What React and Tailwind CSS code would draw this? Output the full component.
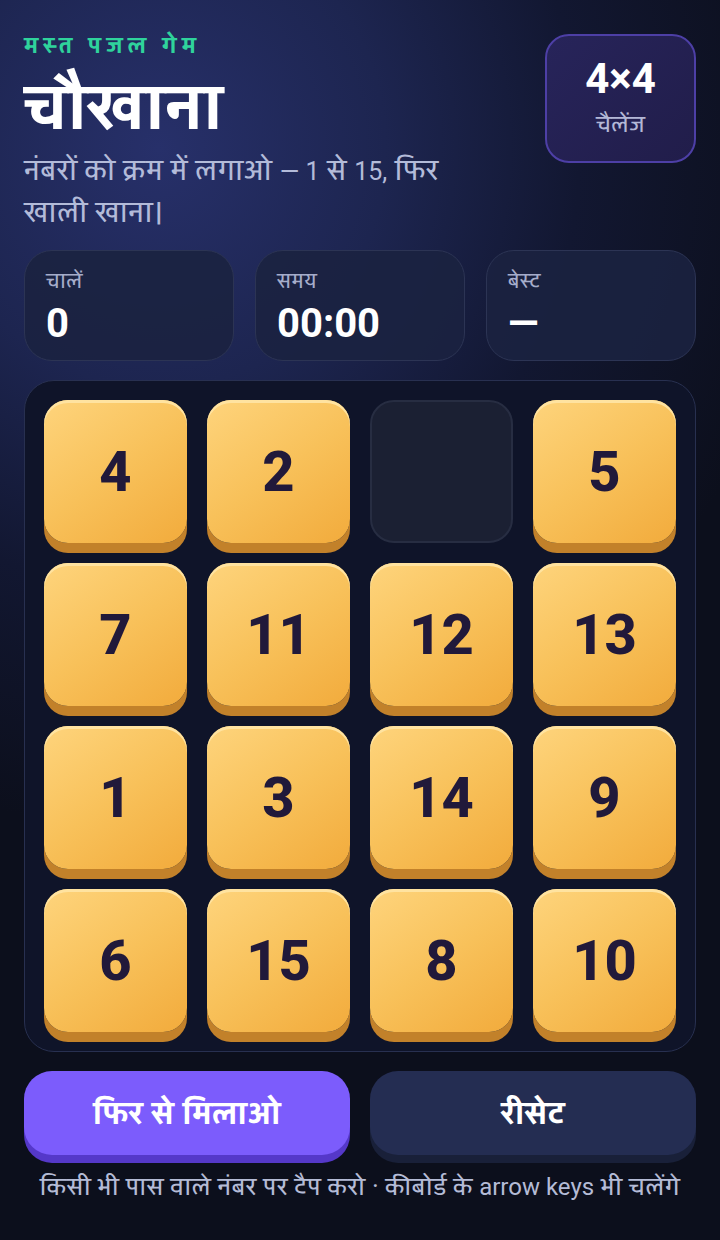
const tiles = [4, 2, 0, 5, 7, 11, 12, 13, 1, 3, 14, 9, 6, 15, 8, 10];

const stats = [
  { label: 'चालें', value: '0' },
  { label: 'समय', value: '00:00' },
  { label: 'बेस्ट', value: '—' },
];

const Tile = ({ n }) => {
  if (!n) {
    return <div className="aspect-square rounded-[24px] bg-[#1b2033] border-2 border-[#272d42]" />;
  }
  return (
    <div className="aspect-square rounded-[24px] bg-[linear-gradient(145deg,#fed47c_0%,#f8c15a_50%,#f2ab3c_100%)] shadow-[inset_0_3px_0_#ffe3a0,0_10px_0_#c2812a] flex items-center justify-center">
      <span className="text-[56px] font-extrabold text-[#21193a] leading-none">{n}</span>
    </div>
  );
};

export default function App() {
  return (
    <div
      className="w-[720px] h-[1240px] overflow-hidden bg-[radial-gradient(ellipse_90%_55%_at_22%_12%,#27306a_0%,#1d2550_35%,#121731_65%,#0c0f1c_100%)] px-6 pt-[30px] text-white"
      style={{ fontFamily: 'Roboto, Yantramanav, "Noto Sans Devanagari", sans-serif' }}
    >
      <header className="flex justify-between items-start">
        <div>
          <p className="text-[24px] font-bold tracking-[0.2em] text-[#2fd39c] leading-[30px]">मस्त पजल गेम</p>
          <h1 className="text-[67px] font-bold leading-[80px] mt-[6px]">चौखाना</h1>
          <p className="text-[30px] leading-[40px] text-[#b3bbd9] max-w-[460px] mt-[4px]">
            नंबरों को क्रम में लगाओ <span className="text-[25px]">— 1</span> से <span className="text-[25px]">15,</span> फिर खाली खाना।
          </p>
        </div>
        <div className="w-[151px] h-[129px] mt-[4px] rounded-[24px] border-2 border-[#4d3fa6] bg-[linear-gradient(135deg,#27245a,#211d4a)] flex flex-col items-center justify-center">
          <span className="text-[42px] font-bold leading-none -mt-[4px]">4×4</span>
          <span className="text-[24px] text-[#b3b7d6] mt-[12px] leading-none">चैलेंज</span>
        </div>
      </header>

      <section className="grid grid-cols-3 gap-[21px] mt-[18px]">
        {stats.map((s) => (
          <div key={s.label} className="h-[111px] rounded-[28px] bg-[#1b2240]/90 border border-[#2c3454] px-[21px] pt-[19px]">
            <p className="text-[22px] text-[#a5acca] leading-none">{s.label}</p>
            <p className="text-[40px] font-bold leading-none mt-[12px]">{s.value}</p>
          </div>
        ))}
      </section>

      <section className="mt-[19px] rounded-[30px] bg-[#0f1429] border border-[#283050] p-[19px]">
        <div className="grid grid-cols-4 gap-[20px]">
          {tiles.map((n, i) => (
            <Tile key={i} n={n} />
          ))}
        </div>
      </section>

      <div className="grid grid-cols-2 gap-[20px] mt-[19px]">
        <button className="h-[84px] rounded-[28px] bg-[#7c5cfc] shadow-[0_8px_0_#5538c9] text-[33px] font-bold text-white">
          फिर से मिलाओ
        </button>
        <button className="h-[84px] rounded-[28px] bg-[#242d52] shadow-[0_8px_0_#192039] text-[33px] font-bold text-white">
          रीसेट
        </button>
      </div>

      <p className="text-center text-[26px] text-[#b4bbd6] mt-[12px] whitespace-nowrap">
        किसी भी पास वाले नंबर पर टैप करो · कीबोर्ड के <span className="text-[24px]">arrow keys</span> भी चलेंगे
      </p>
    </div>
  );
}
